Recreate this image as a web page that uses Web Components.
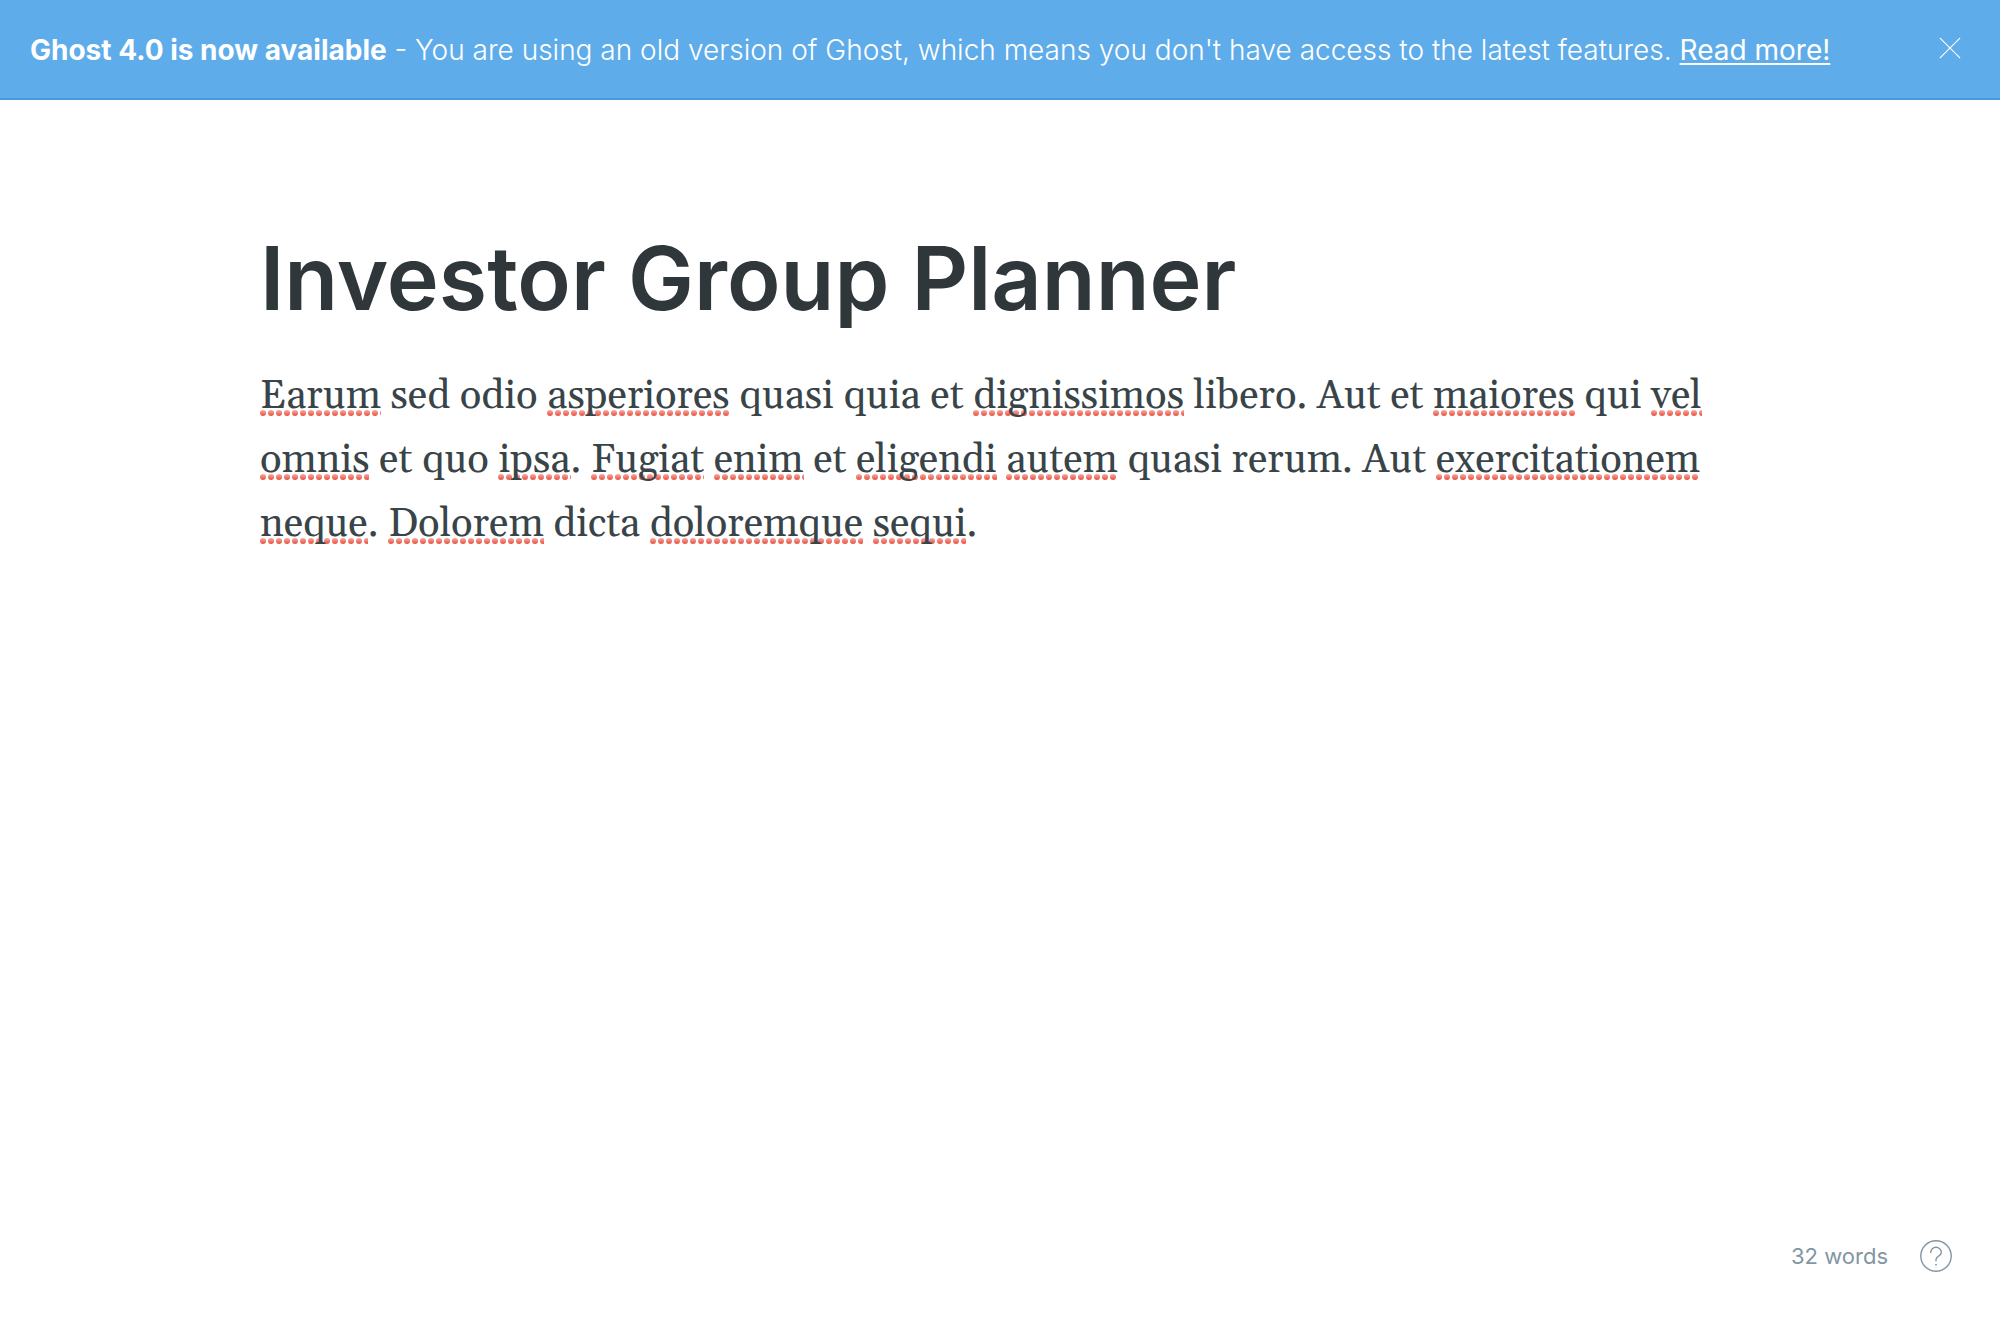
<!DOCTYPE html>
<html lang="en">
<head>
<meta charset="utf-8">
<meta name="viewport" content="width=device-width, initial-scale=1">
<title>Investor Group Planner</title>
<style>
  body { margin: 0; background: #fff; font-family: Inter, "Liberation Sans", sans-serif; }
</style>
</head>
<body>
<ghost-editor>
  <update-banner slot="banner">
    <strong slot="title">Ghost 4.0 is now available</strong>
    You are using an old version of Ghost, which means you don't have access to the latest features.
  </update-banner>
  <post-title value="Investor Group Planner"></post-title>
  <post-body><spell-mark>Earum</spell-mark> sed odio <spell-mark>asperiores</spell-mark> quasi quia et <spell-mark>dignissimos</spell-mark> libero. Aut et <spell-mark>maiores</spell-mark> qui <spell-mark>vel</spell-mark> <spell-mark>omnis</spell-mark> et quo <spell-mark>ipsa</spell-mark>. <spell-mark>Fugiat</spell-mark> <spell-mark>enim</spell-mark> et <spell-mark>eligendi</spell-mark> <spell-mark>autem</spell-mark> quasi rerum. Aut <spell-mark>exercitationem</spell-mark> <spell-mark>neque</spell-mark>. <spell-mark>Dolorem</spell-mark> dicta <spell-mark>doloremque</spell-mark> <spell-mark>sequi</spell-mark>.</post-body>
  <editor-status slot="status">32 words</editor-status>
</ghost-editor>

<script>
class ShadowElement extends HTMLElement {
  constructor() {
    super();
    this.attachShadow({ mode: "open" }).innerHTML = this.constructor.markup;
  }
}

customElements.define("ghost-editor", class extends ShadowElement {
  static markup = `
    <style>
      :host { display: flex; flex-direction: column; min-height: 100vh; }
      main { flex: 1; box-sizing: border-box; width: 100%; max-width: 1480px; margin: 0 auto; padding-top: 122px; }
    </style>
    <slot name="banner"></slot>
    <main><slot></slot></main>
    <slot name="status"></slot>`;
});

customElements.define("update-banner", class extends ShadowElement {
  static markup = `
    <style>
      :host { display: flex; align-items: center; justify-content: space-between; box-sizing: border-box;
              min-height: 100px; padding: 0 38px 0 30px; background: #5facea; border-bottom: 2px solid #4a99e2;
              color: #fff; font-size: 28px; font-weight: 300; line-height: 40px; }
      p { margin: 0; padding-top: 2px; }
      ::slotted(strong) { font-weight: 700; }
      a { color: inherit; font-weight: 400; text-decoration: underline; text-decoration-thickness: 2px; text-underline-offset: 3px; }
      button { display: flex; padding: 0 0 2px; border: 0; background: none; color: inherit; cursor: pointer; }
    </style>
    <p><slot name="title"></slot> - <slot></slot> <a href="#upgrade">Read more!</a></p>
    <button type="button" aria-label="Close">
      <svg width="24" height="24" viewBox="0 0 24 24" fill="none" stroke="currentColor" stroke-width="1.2" stroke-linecap="round"><path d="M2.3 2.3 21.7 21.7M21.7 2.3 2.3 21.7"/></svg>
    </button>`;
});

customElements.define("post-title", class extends ShadowElement {
  static markup = `
    <style>
      :host { display: block; }
      input { display: block; box-sizing: border-box; width: 100%; height: 112px; margin: 0; padding: 0; border: 0;
              outline: 0; background: none; color: #30373b; font: 600 88px/112px Inter, "Liberation Sans", sans-serif; }
    </style>
    <input type="text" aria-label="Post title" spellcheck="false">`;
  connectedCallback() {
    this.shadowRoot.querySelector("input").value = this.getAttribute("value");
  }
});

customElements.define("post-body", class extends ShadowElement {
  static markup = `
    <style>
      :host { display: block; margin-top: 31px; color: #394449;
              font: 400 40px/64px Georgia, Gelasio, "Liberation Serif", serif; }
      p { margin: 0; }
    </style>
    <p><slot></slot></p>`;
});

customElements.define("spell-mark", class extends ShadowElement {
  static markup = `
    <style>
      :host { display: inline;
              background: url("data:image/svg+xml,%3Csvg xmlns='http://www.w3.org/2000/svg' width='8' height='6'%3E%3ClinearGradient id='g' x2='0' y2='1'%3E%3Cstop stop-color='%23f7aaa2'/%3E%3Cstop offset='1' stop-color='%23ea4f3d'/%3E%3C/linearGradient%3E%3Ccircle cx='3' cy='3' r='3' fill='url(%23g)'/%3E%3C/svg%3E") left 0 bottom 6px / 8px 6px repeat-x; }
    </style>
    <slot></slot>`;
});

customElements.define("editor-status", class extends ShadowElement {
  static markup = `
    <style>
      :host { display: flex; align-items: center; justify-content: flex-end; gap: 32px; padding: 0 48px 48px;
              color: #8296a3; font-size: 22px; line-height: 32px; }
      a { display: flex; color: inherit; }
    </style>
    <span><slot></slot></span>
    <a href="#help" aria-label="Help">
      <svg width="32" height="32" viewBox="0 0 32 32" fill="none" stroke="currentColor" stroke-width="1.4"><circle cx="16" cy="16" r="15.2"/><path d="M10.7 13V12.4A5.3 5.1 0 0 1 21.3 12.4C21.3 16.2 16 16 16 19.4V21.2"/><path d="M15.2 24h1.6v1.4h-1.6z" fill="currentColor" stroke="none"/></svg>
    </a>`;
});
</script>
</body>
</html>
